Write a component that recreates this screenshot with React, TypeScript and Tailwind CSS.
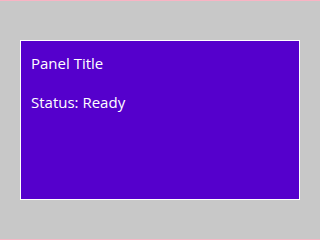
export default function App() {
  return (
    <div className="w-[320px] h-[240px] border-y border-[#f9b4c4] bg-[#c8c8c8] px-[20px] pt-[39px] font-['Open_Sans',sans-serif]">
      <div className="h-[160px] w-[280px] border border-white bg-[#5500cc] px-[10px] pt-[12px] text-white">
        <h2 className="text-[15px] leading-[20px] font-medium">Panel Title</h2>
        <p className="mt-[19px] text-[15px] leading-[20px] font-medium">Status: Ready</p>
      </div>
    </div>
  )
}
